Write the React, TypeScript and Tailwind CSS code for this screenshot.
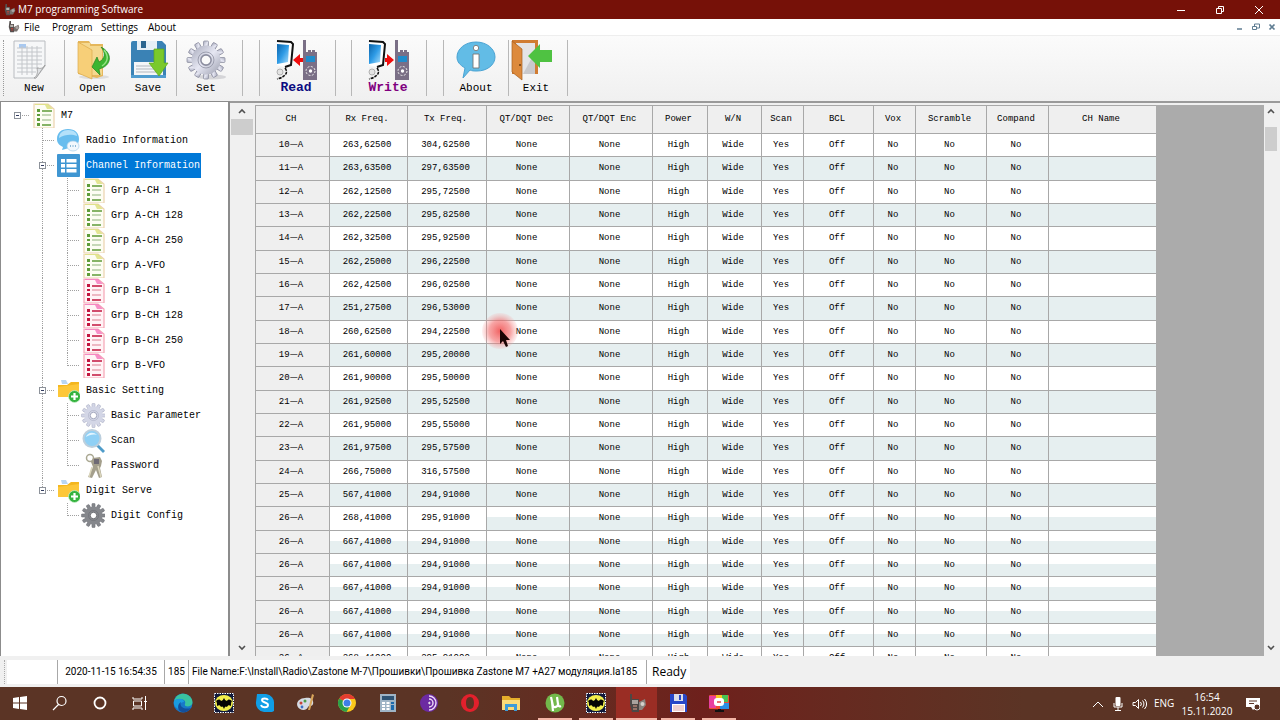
import { ReactNode } from 'react';
import { clsx } from 'clsx';

// Toolbar icons, all drawn on a 42x40 canvas
interface ToolIconProps {
  children: ReactNode;
}

function ToolIcon({ children }: ToolIconProps) {
  return (
    <svg viewBox="0 0 42 40" className="h-10 w-[42px] shrink-0 overflow-visible" aria-hidden="true">
      {children}
    </svg>
  );
}

function NewIcon() {
  return (
    <ToolIcon>
      <path d="M1 1h31v25l-9 12H1z" fill="#f6f7f8" stroke="#b9bcc0" />
      <path d="M6 4h7v4H6z" fill="#a9c9f0" />
      <path d="M4 8h25M4 12h25M4 16h25M4 20h25M4 24h25M4 28h22M4 32h19M9 6v29M14 6v29M19 6v29M24 6v22" stroke="#c3c6ca" strokeWidth="1" fill="none" />
      <path d="M32 25c-1 3-4 4-8 3 1 5 0 8-3 10h2z" fill="#dfe1e4" stroke="#999" strokeWidth="0.8" />
    </ToolIcon>
  );
}

function OpenIcon() {
  return (
    <ToolIcon>
      <ellipse cx="22" cy="37" rx="15" ry="2" fill="#ddd" />
      <path d="M6 1h11l2 3h12v32l-6 2L6 34z" fill="#e5b75c" />
      <path d="M9 3h9v3h12v29H9z" fill="#f5d88f" />
      <path d="M6 2l14 8v29L6 33z" fill="#f7cf78" stroke="#dba94a" strokeWidth="0.7" />
      <path d="M29 7c12 6 11 19-2 22l1 6-8-8 5-10 2 5c6-3 7-9 2-15z" fill="#3cb531" stroke="#22831c" strokeWidth="0.7" />
      <path d="M32 10c5 6 4 12-2 16" stroke="#96e485" strokeWidth="1.5" fill="none" />
    </ToolIcon>
  );
}

function SaveIcon() {
  return (
    <ToolIcon>
      <path d="M4 3q0-2 2-2h29l4 4v31q0 2-2 2H6q-2 0-2-2z" fill="#3a82b5" />
      <path d="M10 1h20v9H10z" fill="#e6eff6" />
      <path d="M14 1h5v7h-5z" fill="#2b658f" />
      <path d="M7 22h29v13H7z" fill="#f4f6f8" />
      <path d="M9 26h21M9 29h21M9 32h21" stroke="#b2b7bd" />
      <path d="M4 35h35v3H4z" fill="#4f9ccf" />
      <path d="M27 9h10v14h4l-9 13-10-13h5z" fill="#7ac92c" stroke="#5ba71b" strokeWidth="0.7" />
    </ToolIcon>
  );
}

interface GearProps {
  cx: number;
  cy: number;
  r: number;
  fill: string;
  stroke: string;
  hub: string;
}

function Gear({ cx, cy, r, fill, stroke, hub }: GearProps) {
  const angles = [0, 30, 60, 90, 120, 150, 180, 210, 240, 270, 300, 330];
  return (
    <g>
      {angles.map((a) => (
        <rect
          key={a}
          x={cx - r * 0.13}
          y={cy - r}
          width={r * 0.26}
          height={r * 0.45}
          rx={r * 0.05}
          fill={fill}
          stroke={stroke}
          strokeWidth={r * 0.04}
          transform={`rotate(${a} ${cx} ${cy})`}
        />
      ))}
      <circle cx={cx} cy={cy} r={r * 0.76} fill={fill} />
      <circle cx={cx} cy={cy} r={r * 0.42} fill="none" stroke={stroke} strokeWidth={r * 0.04} />
      <circle cx={cx} cy={cy} r={r * 0.27} fill={hub} stroke={stroke} strokeWidth={r * 0.08} />
    </g>
  );
}

function SetIcon() {
  return (
    <ToolIcon>
      <defs>
        <linearGradient id="steel" x1="0" y1="0" x2="1" y2="1">
          <stop offset="0" stopColor="#a6a9ba" />
          <stop offset="0.5" stopColor="#e6e7f3" />
          <stop offset="1" stopColor="#9b9eae" />
        </linearGradient>
      </defs>
      <ellipse cx="27" cy="37" rx="14" ry="2.5" fill="#d5d5d8" />
      <Gear cx={21} cy={20} r={19} fill="url(#steel)" stroke="#8b8d9f" hub="#fafafa" />
    </ToolIcon>
  );
}

interface TransferIconProps {
  direction: 'read' | 'write';
}

function TransferIcon({ direction }: TransferIconProps) {
  return (
    <ToolIcon>
      <defs>
        <linearGradient id="screen" x1="0" y1="0" x2="1" y2="1">
          <stop offset="0" stopColor="#0b62a8" />
          <stop offset="0.5" stopColor="#2e9be6" />
          <stop offset="1" stopColor="#aee0fb" />
        </linearGradient>
      </defs>
      <path d="M2 1l14 1 2 2-2 21-6 2-8-2z" fill="#fff" />
      <path d="M2 1l14 1 2 2-2 21-6 2" fill="none" stroke="#111" strokeWidth="2" />
      <path d="M2 4l12 1-1 17-11 2z" fill="url(#screen)" />
      <path d="M2 27h8v8l-3 4H2z" fill="#f1f1f1" />
      <path d="M10 28q3 4 0 7t-8 4" fill="none" stroke="#111" strokeWidth="1.500" strokeDasharray="3 1" />
      <circle cx="5" cy="32" r="3" fill="#e4e4e4" stroke="#999" strokeWidth="0.7" />
      <path d="M28 0h3v12h2v-2h3v2h1v-2h3v2h2v28H28z" fill="#7a6f86" />
      <path d="M31 16h9v6h-9z" fill="#1f8ccb" />
      <circle cx="35.500" cy="31" r="4.500" fill="none" stroke="#eee" strokeDasharray="2 1.5" />
      <circle cx="35.500" cy="31" r="1.700" fill="#fff" />
      {direction === 'read' ? (
        <path d="M18 20l7-6v4h3v4h-3v4z" fill="#f00c0c" />
      ) : (
        <path d="M27 20l-7-6v4h-2v4h2v4z" fill="#f00c0c" />
      )}
    </ToolIcon>
  );
}

function AboutIcon() {
  return (
    <ToolIcon>
      <path d="M21 2c11 0 19 7 19 15s-8 14-18 14c-3 0-5 0-7-1l-7 8 2-10C5 25 2 22 2 17 2 9 10 2 21 2z" fill="#62bce6" stroke="#4aa3d3" />
      <circle cx="21" cy="8" r="2.700" fill="#fff" stroke="#777" strokeWidth="0.9" />
      <path d="M18 14h6v14h-6z" fill="#fff" stroke="#777" strokeWidth="0.9" />
    </ToolIcon>
  );
}

function ExitIcon() {
  return (
    <ToolIcon>
      <path d="M-3 0h26v34H-3z" fill="#d07c32" />
      <path d="M1 3h19v31H6z" fill="#e4e4e6" />
      <path d="M8 34L20 12v22z" fill="#c9c9cc" />
      <path d="M-3 1l10 8v31l-10-8z" fill="#dd8a3c" stroke="#a65f1e" strokeWidth="0.7" />
      <circle cx="5" cy="25" r="1" fill="#6a3a0e" />
      <path d="M13 16l12-12v6h12v12H25v6z" fill="#4fc242" />
    </ToolIcon>
  );
}

// Tree icons, all drawn on a 25x25 canvas
interface TreeIconProps {
  kind: TreeKind;
}

type TreeKind = 'green' | 'pink' | 'chat' | 'list' | 'folder' | 'gear' | 'magnifier' | 'keys' | 'darkgear';

function TreeIcon({ kind }: TreeIconProps) {
  return (
    <svg viewBox="0 0 25 25" className="h-[25px] w-[25px] shrink-0" aria-hidden="true">
      {(kind === 'green' || kind === 'pink') && <SheetShape pink={kind === 'pink'} />}
      {kind === 'chat' && (
        <>
          <path d="M13 1c7 0 11 4 11 10s-4 9-10 9l-7 2 1-3c-4-2-6-4-6-8C2 5 6 1 13 1z" fill="#68bdee" />
          <path d="M13 2c6 0 9 3 9 6-5-2-12-2-18 2 0-5 4-8 9-8z" fill="#b4e1fa" />
          <ellipse cx="18" cy="18" rx="6" ry="5" fill="#f2f8fd" stroke="#a9cfe8" strokeWidth="0.7" />
          <path d="M15 18h1M17.500 18h1M20 18h1" stroke="#6ba5cc" strokeWidth="1.300" />
        </>
      )}
      {kind === 'list' && (
        <>
          <rect x="2" y="1" width="23" height="23" rx="1" fill="#3f96d2" />
          <path d="M6 6h4v3.500H6zM6 11h4v3.500H6zM6 16h4v3.500H6zM11.500 6h10v3.500h-10zM11.500 11h10v3.500h-10zM11.500 16h10v3.500h-10z" fill="#fff" />
        </>
      )}
      {kind === 'folder' && (
        <>
          <path d="M6 2h5l2 4H7z" fill="#b9d6f2" />
          <path d="M3 7h9l4-3h8v15H3z" fill="#f4b61e" />
          <path d="M3 9l21-3v13H3z" fill="#fdc738" />
          <circle cx="19.500" cy="18.500" r="6" fill="#35b33f" stroke="#c9efcb" strokeWidth="0.8" />
          <path d="M19.500 15v7M16 18.500h7" stroke="#fff" strokeWidth="2.200" />
        </>
      )}
      {kind === 'gear' && <Gear cx={13.5} cy={12.5} r={12} fill="#d3d6e6" stroke="#a0a4bb" hub="#fff" />}
      {kind === 'darkgear' && <Gear cx={13.5} cy={12.5} r={12} fill="#85878c" stroke="#66686e" hub="#fff" />}
      {kind === 'magnifier' && (
        <>
          <path d="M18 16l7 7-2 2-7-7z" fill="#4f9cc9" />
          <circle cx="12" cy="10.500" r="8.500" fill="#8fd0f5" stroke="#bccfdd" strokeWidth="2" />
          <path d="M6 9c1-4 7-6 11-2-4-1-8 0-11 2z" fill="#e2f5ff" />
        </>
      )}
      {kind === 'keys' && (
        <>
          <circle cx="10" cy="5" r="3.500" fill="none" stroke="#aaa892" strokeWidth="1.500" />
          <path d="M11 9l2-4 7-1 2 4-1 5-1 2 2 9-3 1-3-8-4 8-4-1 5-10z" fill="#a49f8c" />
          <path d="M12 14L9 24M18 13l3 11" stroke="#dad5bb" strokeWidth="1.500" />
          <path d="M14 6h5v5h-5z" fill="#6e6a74" />
        </>
      )}
    </svg>
  );
}

interface SheetShapeProps {
  pink: boolean;
}

function SheetShape({ pink }: SheetShapeProps) {
  const edge = pink ? '#f5a4b4' : '#ecd2ae';
  const fold = pink ? '#f576bd' : '#dce07a';
  const dot = pink ? '#c2153f' : '#5f9b38';
  return (
    <>
      <path d="M4 1h14l6 5v19H4z" fill={pink ? '#fff4f6' : '#fdfdf3'} stroke={edge} strokeWidth="1.200" />
      <path d="M5 1h13l5 5h-6l-2-4H5z" fill={fold} opacity="0.8" />
      <path d="M7 6h3v3H7zM7 11h3v2H7zM7 15h3v3H7zM7 20h3v3H7z" fill={dot} />
      <path d="M12 8h10M12 22h9" stroke={dot} strokeWidth="1.500" />
      <path d="M12 12h9M12 17h9" stroke={pink ? '#e7a5b2' : '#b4cba4'} strokeWidth="1.500" />
    </>
  );
}

type Guide = 'none' | 'pipe' | 'tee' | 'end' | 'root' | 'box' | 'boxEnd';

interface TreeRow {
  label: string;
  kind: TreeKind;
  guides: Guide[];
  selected?: boolean;
}

const treeRows: TreeRow[] = [
  { label: 'M7', kind: 'green', guides: ['root'] },
  { label: 'Radio Information', kind: 'chat', guides: ['none', 'tee'] },
  { label: 'Channel Information', kind: 'list', guides: ['none', 'box'], selected: true },
  { label: 'Grp A-CH 1', kind: 'green', guides: ['none', 'pipe', 'tee'] },
  { label: 'Grp A-CH 128', kind: 'green', guides: ['none', 'pipe', 'tee'] },
  { label: 'Grp A-CH 250', kind: 'green', guides: ['none', 'pipe', 'tee'] },
  { label: 'Grp A-VFO', kind: 'green', guides: ['none', 'pipe', 'tee'] },
  { label: 'Grp B-CH 1', kind: 'pink', guides: ['none', 'pipe', 'tee'] },
  { label: 'Grp B-CH 128', kind: 'pink', guides: ['none', 'pipe', 'tee'] },
  { label: 'Grp B-CH 250', kind: 'pink', guides: ['none', 'pipe', 'tee'] },
  { label: 'Grp B-VFO', kind: 'pink', guides: ['none', 'pipe', 'end'] },
  { label: 'Basic Setting', kind: 'folder', guides: ['none', 'box'] },
  { label: 'Basic Parameter', kind: 'gear', guides: ['none', 'pipe', 'tee'] },
  { label: 'Scan', kind: 'magnifier', guides: ['none', 'pipe', 'tee'] },
  { label: 'Password', kind: 'keys', guides: ['none', 'pipe', 'end'] },
  { label: 'Digit Serve', kind: 'folder', guides: ['none', 'boxEnd'] },
  { label: 'Digit Config', kind: 'darkgear', guides: ['none', 'none', 'end'] },
];

// Dotted connector and collapse box of one tree cell
function TreeGuide({ type }: { type: Guide }) {
  const isBox = type === 'box' || type === 'boxEnd' || type === 'root';
  return (
    <svg viewBox="0 0 25 25" className="h-[25px] w-[25px] shrink-0" aria-hidden="true">
      <g stroke="#a0a0a0" strokeDasharray="1 1">
        {(type === 'pipe' || type === 'tee' || type === 'box') && <path d="M12.500 0v25" />}
        {(type === 'end' || type === 'boxEnd') && <path d="M12.500 0v13" />}
        {type !== 'none' && type !== 'pipe' && <path d="M13 12.500h11" />}
      </g>
      {isBox && (
        <>
          <rect x="9.500" y="9.500" width="6" height="6" fill="#fff" stroke="#8d929a" />
          <path d="M11 12.500h3" stroke="#333c60" />
        </>
      )}
    </svg>
  );
}

function TreePanel() {
  return (
    <nav className="w-[230px] shrink-0 border-t border-r-2 border-l border-[#8c8c8c] bg-white pt-px pl-1" aria-label="Device tree">
      <ul>
        {treeRows.map((row) => (
          <li key={row.label}>
            <button className="flex h-[25px] items-center text-[10px] whitespace-pre">
              {row.guides.map((guide, i) => (
                <TreeGuide key={i} type={guide} />
              ))}
              <TreeIcon kind={row.kind} />
              <span
                className={clsx(
                  'ml-[5px] flex h-[25px] items-center px-px',
                  row.selected && 'bg-[#0078d7] text-white'
                )}
              >
                {row.label}
              </span>
            </button>
          </li>
        ))}
      </ul>
    </nav>
  );
}

// Vertical scrollbar with arrow buttons
interface ScrollbarProps {
  className?: string;
  thumbClassName: string;
}

function Scrollbar({ className, thumbClassName }: ScrollbarProps) {
  return (
    <div className={clsx('flex shrink-0 flex-col bg-[#f0f0f0]', className)}>
      <button className="flex h-4 w-full items-center justify-center" aria-label="Scroll up">
        <svg viewBox="0 0 8 6" className="h-1.5 w-2">
          <path d="M1 5l3-3 3 3" fill="none" stroke="#505050" strokeWidth="1.600" />
        </svg>
      </button>
      <div className={clsx('bg-[#cdcdcd]', thumbClassName)} />
      <button className="mt-auto flex h-4 w-full items-center justify-center" aria-label="Scroll down">
        <svg viewBox="0 0 8 6" className="h-1.5 w-2">
          <path d="M1 1l3 3 3-3" fill="none" stroke="#505050" strokeWidth="1.600" />
        </svg>
      </button>
    </div>
  );
}

const columns = [
  { title: 'CH', width: 'w-[74px]' },
  { title: 'Rx Freq.', width: 'w-[78px]' },
  { title: 'Tx Freq.', width: 'w-[79px]' },
  { title: 'QT/DQT Dec', width: 'w-[83px]' },
  { title: 'QT/DQT Enc', width: 'w-[83px]' },
  { title: 'Power', width: 'w-[55px]' },
  { title: 'W/N', width: 'w-[54px]' },
  { title: 'Scan', width: 'w-[42px]' },
  { title: 'BCL', width: 'w-[70px]' },
  { title: 'Vox', width: 'w-[42px]' },
  { title: 'Scramble', width: 'w-[71px]' },
  { title: 'Compand', width: 'w-[62px]' },
  { title: 'CH Name', width: 'w-[108px]' },
];

const channels: [string, string, string][] = [
  ['10', '263,62500', '304,62500'],
  ['11', '263,63500', '297,63500'],
  ['12', '262,12500', '295,72500'],
  ['13', '262,22500', '295,82500'],
  ['14', '262,32500', '295,92500'],
  ['15', '262,25000', '296,22500'],
  ['16', '262,42500', '296,02500'],
  ['17', '251,27500', '296,53000'],
  ['18', '260,62500', '294,22500'],
  ['19', '261,60000', '295,20000'],
  ['20', '261,90000', '295,50000'],
  ['21', '261,92500', '295,52500'],
  ['22', '261,95000', '295,55000'],
  ['23', '261,97500', '295,57500'],
  ['24', '266,75000', '316,57500'],
  ['25', '567,41000', '294,91000'],
  ['26', '268,41000', '295,91000'],
  ['26', '667,41000', '294,91000'],
  ['26', '667,41000', '294,91000'],
  ['26', '667,41000', '294,91000'],
  ['26', '667,41000', '294,91000'],
  ['26', '667,41000', '294,91000'],
  ['26', '268,41000', '295,91000'],
];

const settings = ['None', 'None', 'High', 'Wide', 'Yes', 'Off', 'No', 'No', 'No', ''];

const halfShade = 'bg-[linear-gradient(#ffffff_45%,#e6eff0_45%)]';

function cellShade(row: number, col: number) {
  if (row > 16) return halfShade;
  if (row === 16) return col < 2 ? 'bg-white' : halfShade;
  return row % 2 === 1 ? 'bg-[#e6eff0]' : 'bg-white';
}

const cellStyle = 'border-t border-l border-[#a8a8a8] pt-0 pr-[3px] pb-px pl-0 font-normal';

function ChannelTable() {
  return (
    <table className="w-[901px] table-fixed border-separate border-spacing-0 text-center text-[9px] leading-3">
      <thead>
        <tr className="h-7">
          {columns.map((col) => (
            <th key={col.title} scope="col" className={clsx('bg-[#efefef]', cellStyle, col.width)}>
              {col.title}
            </th>
          ))}
        </tr>
      </thead>
      <tbody>
        {channels.map(([ch, rx, tx], row) => (
          <tr key={row} className={row % 3 === 1 ? 'h-6' : 'h-[23px]'}>
            <th scope="row" className={clsx('bg-[#efefef]', cellStyle)}>
              {ch}
              <span className="font-['Noto_Sans_CJK_SC',sans-serif] leading-none">—</span>A
            </th>
            {[rx, tx, ...settings].map((value, col) => (
              <td key={col} className={clsx(cellStyle, cellShade(row, col))}>
                {value}
              </td>
            ))}
          </tr>
        ))}
      </tbody>
    </table>
  );
}

function RadioLogo({ className }: { className?: string }) {
  return (
    <svg viewBox="0 0 16 16" className={clsx('shrink-0', className)} aria-hidden="true">
      <path d="M2 0h2v4h4v11H3L1 8z" fill="#55504f" />
      <path d="M3 5h4v3H3z" fill="#b9b3ae" />
      <path d="M8 8l6-3 1 4-3 5H8z" fill="#77716e" />
      <path d="M4 10h3M4 12h3" stroke="#c9413a" />
      <circle cx="12" cy="8.500" r="2" fill="#aaa6a3" />
    </svg>
  );
}

function TitleBar() {
  return (
    <header className="flex h-[19px] shrink-0 items-center bg-[#761108] text-[10px] text-white">
      <RadioLogo className="ml-1 h-3 w-3" />
      <h1 className="ml-0.5">M7 programming Software</h1>
      <div className="ml-auto flex">
        <button className="flex w-[39px] justify-center" aria-label="Minimize">
          <svg viewBox="0 0 10 10" className="h-2.5 w-2.5"><path d="M1 5.500h8" stroke="#fff" /></svg>
        </button>
        <button className="flex w-[39px] justify-center" aria-label="Restore">
          <svg viewBox="0 0 10 10" className="h-2.5 w-2.5" fill="none" stroke="#fff">
            <path d="M1.500 3.500h5v5h-5zM3.500 3V1.500h5v5H7" />
          </svg>
        </button>
        <button className="mr-0.5 flex w-[39px] justify-center" aria-label="Close">
          <svg viewBox="0 0 10 10" className="h-2.5 w-2.5" stroke="#fff"><path d="M1 1l8 8M9 1L1 9" /></svg>
        </button>
      </div>
    </header>
  );
}

function MenuBar() {
  return (
    <nav className="flex h-[17px] shrink-0 items-center border-b border-[#eeeeee] bg-white text-[10px]" aria-label="Main menu">
      <RadioLogo className="mr-1 ml-2 h-3 w-3" />
      <button className="w-7 text-left">File</button>
      <button className="w-[49px] text-left">Program</button>
      <button className="w-[47px] text-left">Settings</button>
      <button className="text-left">About</button>
      <div className="mr-px ml-auto flex gap-0.5">
        <button className="flex h-3.5 w-3.5 items-center justify-center" aria-label="Minimize document">
          <svg viewBox="0 0 8 8" className="h-2 w-2"><path d="M1 6h5" stroke="#5f7d92" strokeWidth="1.500" /></svg>
        </button>
        <button className="flex h-3.5 w-3.5 items-center justify-center" aria-label="Restore document">
          <svg viewBox="0 0 8 8" className="h-2 w-2" fill="none" stroke="#5f7d92">
            <path d="M.5 3.500h4v3h-4zM2.500 3V1h5v4H5" />
          </svg>
        </button>
        <button className="flex h-3.5 w-3.5 items-center justify-center" aria-label="Close document">
          <svg viewBox="0 0 8 8" className="h-2 w-2" stroke="#5f7d92" strokeWidth="1.700"><path d="M1.500 1.500l5 5M6.500 1.500l-5 5" /></svg>
        </button>
      </div>
    </nav>
  );
}

interface ToolButtonProps {
  label: string;
  icon: ReactNode;
  className: string;
}

function ToolButton({ label, icon, className }: ToolButtonProps) {
  return (
    <button className={clsx('flex shrink-0 flex-col items-center leading-4', className)}>
      {icon}
      <span>{label}</span>
    </button>
  );
}

function Separator({ className }: { className?: string }) {
  return <div className={clsx('h-14 w-px shrink-0 bg-[#b8b8b8]', className)} />;
}

function Toolbar() {
  return (
    <div className="flex h-[65px] shrink-0 items-start bg-linear-to-b from-[#fbfbfb] to-[#f0f0f0] pt-1 text-[11px]" role="toolbar">
      <div className="h-14 w-1 shrink-0 border-r border-dotted border-[#999999]" />
      <ToolButton label="New" icon={<NewIcon />} className="w-[60px]" />
      <Separator />
      <ToolButton label="Open" icon={<OpenIcon />} className="w-[55px]" />
      <ToolButton label="Save" icon={<SaveIcon />} className="w-14" />
      <Separator />
      <ToolButton label="Set" icon={<SetIcon />} className="w-[58px]" />
      <Separator className="ml-[7px]" />
      <Separator className="ml-4" />
      <ToolButton label="Read" icon={<TransferIcon direction="read" />} className="w-[72px] text-[13px] font-bold text-[#0a0a80]" />
      <Separator className="ml-[3px]" />
      <Separator className="ml-[15px]" />
      <ToolButton label="Write" icon={<TransferIcon direction="write" />} className="w-[72px] text-[13px] font-bold text-[#800080]" />
      <Separator className="ml-0.5" />
      <Separator className="ml-4" />
      <ToolButton label="About" icon={<AboutIcon />} className="w-16" />
      <Separator />
      <ToolButton label="Exit" icon={<ExitIcon />} className="w-[54px]" />
      <Separator className="ml-1" />
    </div>
  );
}

function StatusBar() {
  return (
    <footer className="flex h-[31px] shrink-0 items-center bg-[#f0f0f0] font-[Roboto,sans-serif] text-[10px] whitespace-pre">
      <div className="ml-1 h-6 w-[3px] border-l border-dotted border-[#aaaaaa]" />
      <div className="h-6 w-[51px] border-r border-[#a8a8a8] bg-white" />
      <div className="flex h-6 w-[107px] items-center justify-center border-r border-[#a8a8a8] bg-white">2020-11-15 16:54:35</div>
      <div className="flex h-6 w-6 items-center justify-center border-r border-[#a8a8a8] bg-white">185</div>
      <div className="flex h-6 w-[458px] items-center border-r border-[#a8a8a8] bg-white pl-[3px]">
        File Name:F:\Install\Radio\Zastone M-7\Прошивки\Прошивка Zastone M7 +A27 модуляция.la185
      </div>
      <div className="flex h-6 items-center bg-white px-1 pl-[5px] font-['Open_Sans',sans-serif] text-[12px]">Ready</div>
    </footer>
  );
}

// Taskbar icons, all drawn on a 20x20 canvas
function BatIcon() {
  return (
    <>
      <rect width="20" height="20" fill="#111a3c" />
      <rect x="0.500" y="0.500" width="19" height="19" fill="none" stroke="#fff" strokeDasharray="1.500 1" />
      <ellipse cx="10" cy="10" rx="9" ry="8" fill="#f3ef4c" />
      <path d="M2 8c2-2 4-2 5 0l2-1 .5-1.500h1L11 7l2 1c1-2 3-2 5 0-1 1-1 3-1 5-2-1-3-1-4 1-1-1-2-1-3 2-1-3-2-3-3-2-1-2-2-2-4-1 0-2 0-4-1-5z" fill="#050505" />
    </>
  );
}

const pinnedApps: { name: string; icon: ReactNode }[] = [
  {
    name: 'Edge',
    icon: (
      <>
        <circle cx="10" cy="10" r="9.500" fill="#1878c8" />
        <path d="M1 8C3 1 10-1 15 2c5 3 6 9 2 11-3 1-6 0-5-2 1-3-1-5-5-5-3 0-5 1-6 2z" fill="#39c3a0" />
        <path d="M1 8c3-3 10-3 10 1-4 0-6 4-3 8-4-1-8-4-7-9z" fill="#1a9be0" />
        <path d="M8 9c-2 4 2 8 10 6-3 4-6 5-9 4-5-1-5-8-1-10z" fill="#134f9c" />
      </>
    ),
  },
  { name: 'Bat', icon: <BatIcon /> },
  {
    name: 'Skype',
    icon: (
      <>
        <path d="M2 1h9a9 9 0 0 1 8 10v7l-2 1H9A9 9 0 0 1 1 9z" fill="#109ee6" />
        <path d="M13 7c-1-2-6-2-6 0 0 3 6 2 6 5 0 3-6 3-7 0" fill="none" stroke="#fff" strokeWidth="1.900" />
      </>
    ),
  },
  {
    name: 'Paint',
    icon: (
      <>
        <path d="M9 5c6-1 9 2 8 6-1 3-4 1-5 3-1 3-5 4-8 2-6-4-2-11 5-11z" fill="#d5dbe4" />
        <circle cx="5" cy="10" r="1.500" fill="#c8433a" />
        <circle cx="9" cy="8" r="1.500" fill="#4e9d47" />
        <circle cx="6" cy="14" r="1.400" fill="#3f6fc4" />
        <path d="M12 17L16 1l2 1-4 15z" fill="#d8a55a" />
      </>
    ),
  },
  {
    name: 'Chrome',
    icon: (
      <>
        <circle cx="10" cy="10" r="9" fill="#fbc91b" />
        <path d="M10 10L2.200 5.500A9 9 0 0 1 17.800 5.500L18 6h-8z" fill="#e23d30" />
        <path d="M10 10L2.200 5.500A9 9 0 0 0 9.500 19l4-7z" fill="#2ba14b" />
        <circle cx="10" cy="10" r="4.500" fill="#fff" />
        <circle cx="10" cy="10" r="3.500" fill="#3f7fe8" />
      </>
    ),
  },
  {
    name: 'Calculator',
    icon: (
      <>
        <rect x="2" y="1" width="16" height="18" fill="#9fb4c5" />
        <path d="M4 3h12v4H4z" fill="#2f5474" />
        <path d="M4 9h3v2H4zM8.500 9h3v2h-3zM4 12h3v2H4zM8.500 12h3v2h-3zM4 15h3v2H4zM8.500 15h3v2h-3z" fill="#fff" />
        <path d="M13 9h3v2h-3zM13 12h3v5h-3z" fill="#1c6aae" />
      </>
    ),
  },
  {
    name: 'Tor',
    icon: (
      <>
        <circle cx="10" cy="10" r="9" fill="#6c2aa2" />
        <path d="M10 3a7 7 0 0 1 0 14M10 6a4 4 0 0 1 0 8" fill="none" stroke="#eddcf6" strokeWidth="1.400" />
        <path d="M10 9a1 1 0 0 1 0 2z" stroke="#fff" />
      </>
    ),
  },
  {
    name: 'Opera',
    icon: <path fillRule="evenodd" d="M10 1a9 9 0 1 0 0 18 9 9 0 0 0 0-18zm0 3c3 0 4 3 4 6s-1 6-4 6-4-3-4-6 1-6 4-6z" fill="#e3202c" />,
  },
  {
    name: 'Explorer',
    icon: (
      <>
        <path d="M1 3h7l2 2h9v12H1z" fill="#e5ae2b" />
        <path d="M1 7h18v10H1z" fill="#fbdb79" />
        <path d="M4 18v-7h12v7h-3v-4H7v4z" fill="#3c9bd8" />
      </>
    ),
  },
];

const runningApps: { name: string; icon: ReactNode; active?: boolean }[] = [
  {
    name: 'uTorrent',
    icon: (
      <>
        <circle cx="10" cy="10" r="9.500" fill="#72b84b" />
        <path d="M6 4l2 9c1 2 5 1 5-2l-1-7M7 9l1 9M13 10c0 3 1 4 3 3" fill="none" stroke="#fff" strokeWidth="2.200" />
      </>
    ),
  },
  { name: 'Bat', icon: <BatIcon /> },
  {
    name: 'M7 programming Software',
    active: true,
    icon: (
      <>
        <path d="M3 1h2v5h7v13H5L3 12z" fill="#4c4745" />
        <path d="M5 7h6v4H5z" fill="#a9a39e" />
        <path d="M12 9l6-3 1 6-4 5h-3z" fill="#89827d" />
        <circle cx="15.500" cy="11" r="2" fill="#d5d0cb" />
        <path d="M6 13h4M6 16h4" stroke="#e0a08c" />
      </>
    ),
  },
  {
    name: 'Total Commander',
    icon: (
      <>
        <path d="M2 1h15l2 2v16H2z" fill="#2847c8" />
        <path d="M6 1h9v7H6z" fill="#d9dde8" />
        <path d="M11 2h2v5h-2z" fill="#2847c8" />
        <path d="M4 11h13v8H4z" fill="#fff" />
        <path d="M5 13h11M5 15h11M5 17h11" stroke="#d37a7a" strokeWidth="0.700" />
      </>
    ),
  },
  {
    name: 'Screen recorder',
    icon: (
      <>
        <rect y="2" width="20" height="14" rx="1" fill="#f24b35" />
        <path d="M0 3h7v12H0z" fill="#e93fa0" />
        <path d="M7 2h6v4H7z" fill="#f7c922" />
        <path d="M13 2h6v7h-6z" fill="#48c353" />
        <path d="M11 10h9v6h-9z" fill="#2b8fe4" />
        <rect x="5" y="5" width="10" height="8" rx="3" fill="#fff" />
        <path d="M8 9h4" stroke="#e34343" strokeWidth="1.500" />
        <path d="M9 16h3v1h3v2H6v-2h3z" fill="#111" />
      </>
    ),
  },
];

const systemButtons: { name: string; icon: ReactNode }[] = [
  { name: 'Start', icon: <path d="M3 5l6-1v5.500H3zM10 4l7-1v6.500h-7zM3 10.500h6V16l-6-1zM10 10.500h7V17l-7-1z" fill="#fff" /> },
  {
    name: 'Search',
    icon: <path d="M11.500 3.500a4.500 4.500 0 1 1 0 9 4.500 4.500 0 0 1 0-9zM8.500 11.500L3 17" fill="none" stroke="#fff" strokeWidth="1.200" />,
  },
  { name: 'Cortana', icon: <circle cx="10" cy="10" r="5.500" fill="none" stroke="#fff" strokeWidth="1.800" /> },
  {
    name: 'Task view',
    icon: <path d="M3 4v2h9V4M3 17v-2h9v2M3.500 8h8v5h-8zM15.500 3v14M14 8.500h3" fill="none" stroke="#fff" />,
  },
];

function TaskIcon({ children }: ToolIconProps) {
  return (
    <svg viewBox="0 0 20 20" className="h-5 w-5" aria-hidden="true">
      {children}
    </svg>
  );
}

function Taskbar() {
  return (
    <div className="flex h-[33px] shrink-0 bg-linear-to-r from-[#5b3425] from-35% via-[#6e201c] via-55% to-[#5b3425] to-80% text-[10px] text-white">
      {systemButtons.map((item) => (
        <button key={item.name} aria-label={item.name} className="flex w-10 justify-center pt-1.5">
          <TaskIcon>{item.icon}</TaskIcon>
        </button>
      ))}
      <div className="ml-0.5 flex">
        {pinnedApps.map((item) => (
          <button key={item.name} aria-label={item.name} className="flex w-[41px] justify-center pt-1.5">
            <TaskIcon>{item.icon}</TaskIcon>
          </button>
        ))}
      </div>
      <div className="ml-[3px] flex">
        {runningApps.map((item) => (
          <button
            key={item.name}
            aria-label={item.name}
            className={clsx('flex w-[41px] flex-col items-center justify-between pt-1.5', item.active && 'bg-[#9a2d24]')}
          >
            <TaskIcon>{item.icon}</TaskIcon>
            <span className={clsx('h-0.5 bg-[#f3b5a6]', item.active ? 'w-full' : 'w-[34px]')} />
          </button>
        ))}
      </div>
      <div className="mr-5 ml-auto flex items-center">
        <button aria-label="Show hidden icons" className="w-5">
          <svg viewBox="0 0 12 12" className="h-3 w-3"><path d="M1 9l5-5 5 5" fill="none" stroke="#fff" /></svg>
        </button>
        <button aria-label="Microphone" className="w-5">
          <svg viewBox="0 0 12 14" className="h-3.5 w-3">
            <rect x="3.500" y="0" width="5" height="9" rx="1" fill="#fff" />
            <path d="M2 6v4h8V6M6 10v3M3 13.500h6" fill="none" stroke="#fff" />
          </svg>
        </button>
        <button aria-label="Volume" className="w-[22px]">
          <svg viewBox="0 0 16 12" className="h-3 w-4" fill="none" stroke="#fff">
            <path d="M1 4.500h2.500l3-3v9l-3-3H1zM8.500 4a3 3 0 0 1 0 4M10.500 2.500a5 5 0 0 1 0 7M12.500 1a7 7 0 0 1 0 10" />
          </svg>
        </button>
        <button className="w-[26px] text-left">ENG</button>
        <div className="w-[54px] text-center leading-[14px]">
          <p>16:54</p>
          <p>15.11.2020</p>
        </div>
        <button aria-label="Notifications" className="ml-3">
          <svg viewBox="0 0 14 14" className="h-3.5 w-3.5">
            <path d="M0 1h14v9h-4l-3 3-2-3H0z" fill="#fff" />
            <path d="M3 4h8M3 6.500h5" stroke="#5b3425" />
            <circle cx="11" cy="10" r="3" fill="#5b3425" stroke="#fff" />
          </svg>
        </button>
      </div>
    </div>
  );
}

// Mouse pointer with click highlight
function Pointer() {
  return (
    <svg viewBox="0 0 40 40" className="pointer-events-none absolute top-[311px] left-[480px] h-10 w-10" aria-hidden="true">
      <defs>
        <radialGradient id="halo">
          <stop offset="0" stopColor="#ee3a3a" stopOpacity="0.800" />
          <stop offset="0.600" stopColor="#f26a6a" stopOpacity="0.600" />
          <stop offset="1" stopColor="#f7a0a0" stopOpacity="0.150" />
        </radialGradient>
      </defs>
      <circle cx="20" cy="20" r="18" fill="url(#halo)" />
      <path d="M20 18v15l3-3 3 6 2-1-2-6h4z" fill="#1c0505" />
    </svg>
  );
}

export default function App() {
  return (
    <div className="relative flex h-screen flex-col overflow-hidden bg-[#f0f0f0] font-['Open_Sans',sans-serif] text-black">
      <TitleBar />
      <MenuBar />
      <div className="flex min-h-0 grow flex-col font-['Liberation_Mono',monospace]">
        <Toolbar />
        <main className="flex min-h-0 grow">
          <TreePanel />
          <div className="flex min-w-0 grow border-t-2 border-[#9a9a9a] pr-0.5">
            <Scrollbar className="ml-px w-[22px]" thumbClassName="h-4" />
            <div className="mt-0.5 ml-0.5 min-w-0 grow overflow-hidden bg-[#ababab]">
              <ChannelTable />
            </div>
            <Scrollbar className="w-3.5" thumbClassName="mx-px mt-2 h-6" />
          </div>
        </main>
      </div>
      <StatusBar />
      <Taskbar />
      <Pointer />
    </div>
  );
}
